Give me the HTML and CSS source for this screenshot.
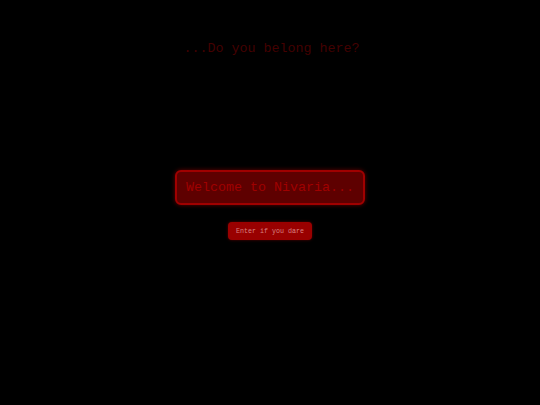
FILE: index.html
```html
<!DOCTYPE html>
<html>
<head>
<meta charset="utf-8">
<link rel="stylesheet" href="styles.css">
</head>
<body>
<div class="page">
  <h1 class="tagline">...Do you belong here?</h1>
  <div class="center">
    <div class="welcome">Welcome to Nivaria...</div>
    <button class="enter">Enter if you dare</button>
  </div>
</div>
</body>
</html>
```
FILE: styles.css
```css
html, body {
  margin: 0;
  padding: 0;
  background: #000;
  height: 100%;
}
.page {
  height: 405px;
  display: flex;
  flex-direction: column;
  align-items: center;
  font-family: "Liberation Mono", "Courier New", monospace;
}
.tagline {
  margin: 41px 0 0 0;
  padding-left: 3px;
  font-size: 13.33px;
  font-weight: normal;
  line-height: 16px;
  color: #440000;
}
.center {
  margin-top: 113px;
  display: flex;
  flex-direction: column;
  align-items: center;
}
.welcome {
  width: 186px;
  height: 31px;
  box-sizing: content-box;
  display: flex;
  align-items: center;
  justify-content: center;
  font-size: 13.33px;
  color: #a00000;
  background: #5e0000;
  border: 2px solid #a00000;
  border-radius: 6px;
  box-shadow: 0 0 4px #600;
}
.enter {
  margin-top: 17px;
  width: 84px;
  height: 18px;
  padding: 0;
  border: 0;
  border-radius: 4px;
  background: #990000;
  color: #d88080;
  font-family: "Liberation Mono", "Courier New", monospace;
  font-size: 6.67px;
  box-shadow: 0 0 3px #500;
}
```
